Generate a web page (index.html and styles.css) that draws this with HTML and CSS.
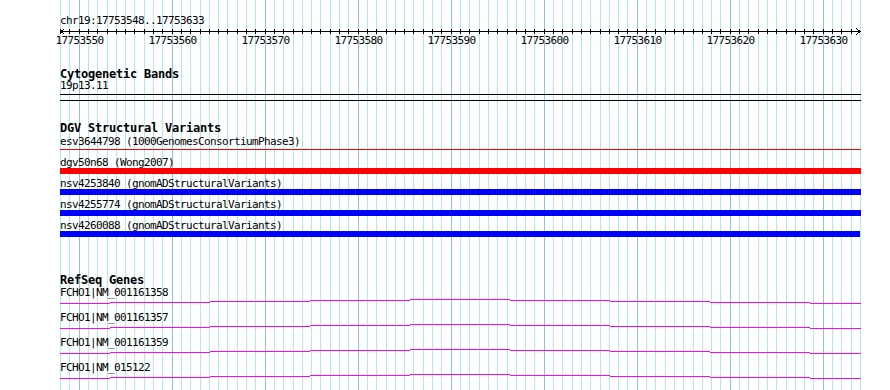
FILE: index.html
```html
<!DOCTYPE html>
<html lang="en">

<head>
    <meta charset="UTF-8">
    <meta name="viewport" content="width=device-width, initial-scale=1.0">
    <title>chr19:17753548..17753633</title>
    <link rel="stylesheet" href="styles.css">
</head>

<body>
    <div class="view">
        <div class="grid"></div>

        <div class="locus">chr19:17753548..17753633</div>
        <svg class="ruler" width="801" height="21"></svg>

        <div class="track cyto">
            <div class="track-title">Cytogenetic Bands</div>
            <div class="label">19p13.11</div>
            <div class="band"></div>
        </div>

        <div class="track dgv">
            <div class="track-title">DGV Structural Variants</div>
            <div class="feature">
                <div class="label">esv3644798 (1000GenomesConsortiumPhase3)</div>
                <div class="thin-line"></div>
            </div>
            <div class="feature">
                <div class="label">dgv50n68 (Wong2007)</div>
                <div class="bar loss"></div>
            </div>
            <div class="feature">
                <div class="label">nsv4253840 (gnomADStructuralVariants)</div>
                <div class="bar gain"></div>
            </div>
            <div class="feature">
                <div class="label">nsv4255774 (gnomADStructuralVariants)</div>
                <div class="bar gain"></div>
            </div>
            <div class="feature">
                <div class="label">nsv4260088 (gnomADStructuralVariants)</div>
                <div class="bar gain short"></div>
            </div>
        </div>

        <div class="track genes">
            <div class="track-title">RefSeq Genes</div>
            <div class="gene">
                <div class="label">FCHO1|NM_001161358</div>
                <div class="intron"></div>
            </div>
            <div class="gene">
                <div class="label">FCHO1|NM_001161357</div>
                <div class="intron"></div>
            </div>
            <div class="gene">
                <div class="label">FCHO1|NM_001161359</div>
                <div class="intron"></div>
            </div>
            <div class="gene">
                <div class="label">FCHO1|NM_015122</div>
                <div class="intron"></div>
            </div>
        </div>
    </div>

    <script src="script.js"></script>
</body>

</html>
```

FILE: styles.css
```css
body {
    margin: 0;
    background-color: white;
    color: black;
    font-family: "DejaVu Sans Mono", monospace;
    font-size: 11px;
    letter-spacing: -0.62px;
}

.view {
    position: relative;
    margin-left: 60px;
    width: 801px;
    height: 390px;
    padding-top: 16px;
    box-sizing: border-box;
}

/* vertical base grid, behind everything */
.grid {
    position: absolute;
    top: 0;
    left: 0;
    width: 801px;
    height: 390px;
}

.gline {
    position: absolute;
    top: 0;
    bottom: 0;
    width: 1px;
    background-color: #aeeaf0;
}

.gline.major {
    background-color: #88c4f0;
}

.locus,
.ruler,
.track {
    position: relative;
}

.locus {
    height: 10px;
    line-height: 10px;
}

.ruler {
    display: block;
    overflow: visible;
}

.ruler path {
    fill: none;
    stroke: black;
    stroke-width: 1;
}

.ruler text {
    font-family: "DejaVu Sans Mono", monospace;
    font-size: 11px;
    letter-spacing: -0.62px;
    fill: black;
}

.track-title {
    height: 10px;
    padding-top: 1px;
    line-height: 11px;
    font-size: 12px;
    font-weight: bold;
    letter-spacing: -0.22px;
}

.label {
    height: 9px;
    padding-top: 1px;
    line-height: 10px;
    white-space: nowrap;
}

/* cytogenetic bands */
.cyto {
    margin-top: 21px;
}

.cyto .label {
    margin-top: 1px;
}

.band {
    margin-top: 4px;
    height: 5px;
    border-top: 1px solid black;
    border-bottom: 1px solid black;
}

/* structural variants */
.dgv {
    margin-top: 21px;
}

.dgv .track-title {
    margin-bottom: 3px;
}

.feature {
    height: 21px;
}

.thin-line {
    margin-top: 3px;
    height: 1px;
    background-color: red;
}

.bar {
    margin-top: 1px;
    height: 6px;
}

.bar.loss {
    background-color: red;
}

.bar.gain {
    background-color: blue;
}

.bar.short {
    width: 800px;
}

/* genes */
.genes {
    margin-top: 33px;
}

.genes .track-title {
    margin-bottom: 2px;
}

.gene {
    height: 25px;
}

.intron {
    display: flex;
    align-items: flex-start;
    height: 15px;
}

.seg {
    flex: none;
    height: 1px;
    background-color: magenta;
}
```

FILE: script.js
```js
const start = 17753548;
const bases = 86;
const scale = 800 / bases;
const svgNS = "http://www.w3.org/2000/svg";

const grid = document.querySelector(".grid");
const ruler = document.querySelector(".ruler");

function xOf(k) {
    return Math.round(k * scale);
}

// grid lines, one per base
for (let k = 0; k <= bases; k++) {
    let line = document.createElement("div");
    line.className = "gline";
    if ((start + k) % 10 === 0) line.classList.add("major");
    line.style.left = xOf(k) + "px";
    grid.append(line);
}

// ruler: axis, ticks, arrows, labels
let d = "M0 5.5H801";
for (let k = 0; k < bases; k++) {
    d += " M" + (xOf(k) + 0.5) + " 3V8";
}
d += " M4.5 2.5L1 5.5L4.5 8.5";
d += " M796.5 2.5L800 5.5L796.5 8.5";

let path = document.createElementNS(svgNS, "path");
path.setAttribute("d", d);
path.setAttribute("shape-rendering", "crispEdges");
ruler.append(path);

for (let k = 0; k <= bases; k++) {
    if ((start + k) % 10 !== 0) continue;
    let label = document.createElementNS(svgNS, "text");
    label.setAttribute("x", xOf(k) + 0.5);
    label.setAttribute("y", 17.5);
    label.setAttribute("text-anchor", "middle");
    label.textContent = start + k;
    ruler.append(label);
}

// gene lines: drawn in 100px tiles, each tile a pixel off the next
const tileWidths = [50, 100, 100, 100, 100, 100, 100, 100, 51];
document.querySelectorAll(".intron").forEach((intron) => {
    tileWidths.forEach((w, i) => {
        let seg = document.createElement("div");
        seg.className = "seg";
        seg.style.width = w + "px";
        seg.style.marginTop = (2 + Math.abs(i - 4)) + "px";
        intron.append(seg);
    });
});
```
